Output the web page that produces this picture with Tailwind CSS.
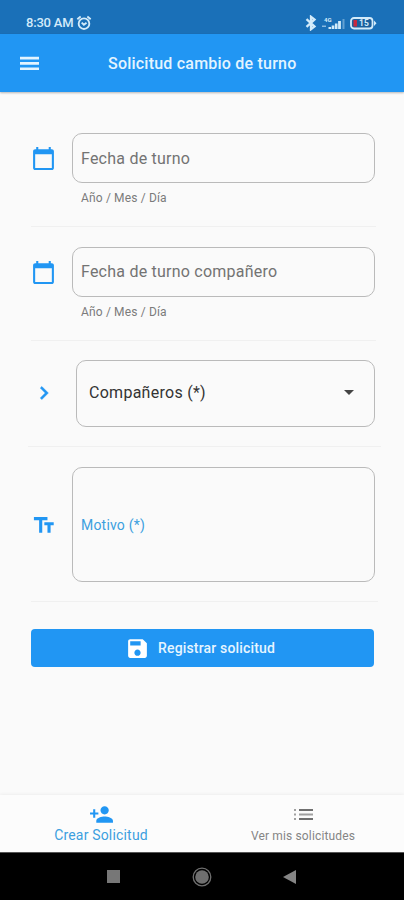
<!DOCTYPE html>
<html lang="es">
<head>
<meta charset="utf-8">
<title>Solicitud cambio de turno</title>
<script src="https://cdn.jsdelivr.net/npm/@tailwindcss/browser@4"></script>
</head>
<body class="w-[404px] h-[900px] overflow-hidden bg-[#fafafa] font-[Roboto,sans-serif] flex flex-col">
<div class="h-[34px] shrink-0 bg-[#1a70b8] flex items-center pt-[11px] pl-[26px] pr-[27px] text-[#d3ebfa]">
  <span class="text-[13px] leading-[16px] font-medium whitespace-nowrap w-[50px] tracking-[-0.2px]">8:30 AM</span>
  <svg class="w-[16px] h-[16px]" viewBox="0 0 24 24" fill="none" stroke="currentColor" stroke-width="2.8"><circle cx="12" cy="13" r="8"/><path d="M2 6.500 7 2.300M22 6.500 17 2.300M8.500 11.500l3.300 3 4-3"/></svg>
  <svg class="ml-auto w-[12px] h-[16px]" viewBox="0 0 12 16" fill="none" stroke="currentColor" stroke-width="2.300"><path d="M1.500 4.200 9.500 11.500 6 14.200V1.800L9.500 4.500 1.500 11.800"/></svg>
  <svg class="ml-[5px] w-[24px] h-[14px]" viewBox="0 0 24 14" fill="currentColor"><text x="2" y="5.500" font-size="6" font-weight="700">4G</text><path opacity=".6" d="M0 9.500h4v1.500H0z"/><path d="M6.500 11h2.600v2H6.500zM9.700 9.500h2.600V13H9.700zM12.900 7.500h2.600V13h-2.600zM16.100 5h2.800v8h-2.800z"/><path opacity=".4" d="M20.500 3h2v10h-2z"/></svg>
  <svg class="ml-[4px] w-[27px] h-[14px]" viewBox="0 0 27 14"><rect x="1" y="2" width="21.500" height="10.500" rx="3" fill="#1a5f9d" stroke="#d3ebfa" stroke-width="1.800"/><path d="M3.500 4H7v6.500H3.500z" fill="#c8283e"/><path d="M24 4.500 26.500 7.300 24 10z" fill="#d3ebfa"/><text x="9" y="10.200" font-size="8.500" font-weight="700" fill="#d3ebfa">15</text></svg>
</div>
<header class="h-[58px] shrink-0 bg-[#2196f3] flex items-center pl-[20px] text-[#e3f4ff] shadow-[0_1px_2px_rgba(0,0,0,0.28)] relative">
  <svg class="w-[19px] h-[15px]" viewBox="0 0 19 15" fill="currentColor"><path d="M0 .8h19v2.700H0zM0 6.100h19v2.700H0zM0 11.400h19v2.700H0z"/></svg>
  <h1 class="ml-[69px] pt-[1px] text-[16px] leading-[20px] font-medium whitespace-nowrap tracking-[0.22px]">Solicitud cambio de turno</h1>
</header>
<main class="flex-1 flex flex-col pl-[31px] pr-[29px] pt-[41px]">
  <section class="h-[94px] border-b border-[#f0f0f0] mr-[-1px] flex">
    <svg class="w-[25px] h-[25px] mt-[13px] mr-[1px] text-[#2196f3]" viewBox="0 0 24 24" fill="currentColor"><path d="M20 3h-1V1h-2v2H7V1H5v2H4c-1.100 0-2 .9-2 2v16c0 1.100.9 2 2 2h16c1.100 0 2-.9 2-2V5c0-1.100-.9-2-2-2zm0 18H4V8h16v13z"/></svg>
    <div class="ml-[15px] w-[303px]">
      <div class="h-[50px] border-[1.500px] border-[#bababa] rounded-[10px] flex items-center pl-[8px] pt-[2px]"><span class="text-[16px] text-[#737373] whitespace-nowrap tracking-[0.23px]">Fecha de turno</span></div>
      <p class="mt-[8px] pl-[9px] text-[12px] leading-[15px] text-[#7b7b7b] tracking-[0.15px]">Año / Mes / Día</p>
    </div>
  </section>
  <section class="mt-[20px] h-[94px] border-b border-[#f0f0f0] mr-[-1px] flex">
    <svg class="w-[25px] h-[25px] mt-[13px] mr-[1px] text-[#2196f3]" viewBox="0 0 24 24" fill="currentColor"><path d="M20 3h-1V1h-2v2H7V1H5v2H4c-1.100 0-2 .9-2 2v16c0 1.100.9 2 2 2h16c1.100 0 2-.9 2-2V5c0-1.100-.9-2-2-2zm0 18H4V8h16v13z"/></svg>
    <div class="ml-[15px] w-[303px]">
      <div class="h-[50px] border-[1.500px] border-[#bababa] rounded-[10px] flex items-center pl-[8px]"><span class="text-[16px] text-[#737373] whitespace-nowrap tracking-[0.23px]">Fecha de turno compañero</span></div>
      <p class="mt-[8px] pl-[9px] text-[12px] leading-[15px] text-[#7b7b7b] tracking-[0.15px]">Año / Mes / Día</p>
    </div>
  </section>
  <section class="mt-[19px] h-[87px] border-b border-[#f0f0f0] ml-[-3px] mr-[-6px] flex">
    <svg class="ml-[3px] mt-[20px] w-[26px] h-[26px] text-[#2196f3]" viewBox="0 0 24 24" fill="currentColor" stroke="currentColor" stroke-width=".5"><path d="M8.590 16.590 13.170 12 8.590 7.410 10 6l6 6-6 6z"/></svg>
    <div class="ml-[19px] w-[299px] h-[67px] border-[1.500px] border-[#bababa] rounded-[10px] flex items-center pl-[12px] pr-[20px] pb-[2px]">
      <span class="text-[16px] text-[#333] whitespace-nowrap tracking-[0.27px]">Compañeros (*)</span>
      <svg class="ml-auto w-[10px] h-[5px]" viewBox="0 0 10 5"><path d="M0 0h10L5 5z" fill="#444"/></svg>
    </div>
  </section>
  <section class="mt-[20px] h-[135px] border-b border-[#f0f0f0] mr-[-3px] flex">
    <svg class="w-[25px] h-[25px] mt-[45px] mr-[1px] text-[#2196f3]" viewBox="0 0 24 24" fill="currentColor"><path d="M2.500 4v3h5v12h3V7h5V4h-13zm19 5h-9v3h3v7h3v-7h3V9z" transform="translate(0.300 .8)"/></svg>
    <div class="ml-[15px] w-[303px] h-[115px] border-[1.500px] border-[#bababa] rounded-[10px] flex items-center pl-[8px] pt-[2px]"><span class="text-[14px] text-[#3c9fdf] whitespace-nowrap tracking-[0.2px]">Motivo (*)</span></div>
  </section>
  <button class="mt-[27px] h-[38px] w-[343px] bg-[#2196f3] rounded-[4px] flex items-center pl-[94px] text-[#e6f5ff]">
    <svg class="w-[25px] h-[25px]" viewBox="0 0 24 24" fill="#fff"><path d="M17 3H5c-1.110 0-2 .9-2 2v14c0 1.100.890 2 2 2h14c1.100 0 2-.9 2-2V7l-4-4zm-5 16c-1.660 0-3-1.340-3-3s1.340-3 3-3 3 1.340 3 3-1.340 3-3 3zm3-10H5V5h10v4z"/></svg>
    <span class="ml-[8px] text-[14px] leading-[18px] font-medium whitespace-nowrap tracking-[0.17px]">Registrar solicitud</span>
  </button>
</main>
<nav class="h-[57px] shrink-0 bg-[#fcfcfc] shadow-[0_-1px_3px_rgba(0,0,0,0.05)] grid grid-cols-2">
  <div class="flex flex-col items-center pt-[7px] text-[#2196f3]">
    <svg class="w-[25px] h-[25px]" viewBox="0 0 24 24" fill="currentColor"><path d="M15 12c2.210 0 4-1.790 4-4s-1.790-4-4-4-4 1.790-4 4 1.790 4 4 4zm-9-2V7H4v3H1v2h3v3h2v-3h3v-2H6zm9 4c-2.670 0-8 1.340-8 4v2h16v-2c0-2.660-5.330-4-8-4z"/></svg>
    <span class="text-[14px] leading-[17px] text-[#3c9fdf] whitespace-nowrap tracking-[0.18px]">Crear Solicitud</span>
  </div>
  <div class="flex flex-col items-center pt-[14px] text-[#858585]">
    <svg class="w-[19px] h-[11px]" viewBox="0 0 19 11"><path fill="#a0a0a0" d="M0 0h2v2H0zM0 4.500h2v2H0zM0 9h2v2H0zM5 4.500h14v2H5z"/><path fill="#707070" d="M5 0h14v2H5zM5 9h14v2H5z"/></svg>
    <span class="mt-[8px] text-[12px] leading-[17px] whitespace-nowrap tracking-[0.15px]">Ver mis solicitudes</span>
  </div>
</nav>
<footer class="h-[48px] shrink-0 bg-black border-t border-[#555] flex items-center pl-[107px] text-[#6f6f6f]">
  <div class="w-[13px] h-[13px] bg-[#777]"></div>
  <svg class="ml-[72px] w-[20px] h-[20px]" viewBox="0 0 20 20"><circle cx="10" cy="10" r="8.800" fill="none" stroke="currentColor" stroke-width="1.300"/><circle cx="10" cy="10" r="6.800" fill="currentColor"/></svg>
  <svg class="ml-[71px] w-[13px] h-[14px]" viewBox="0 0 13 14" fill="#858585"><path d="M13 0v14L0 7z"/></svg>
</footer>
</body>
</html>
